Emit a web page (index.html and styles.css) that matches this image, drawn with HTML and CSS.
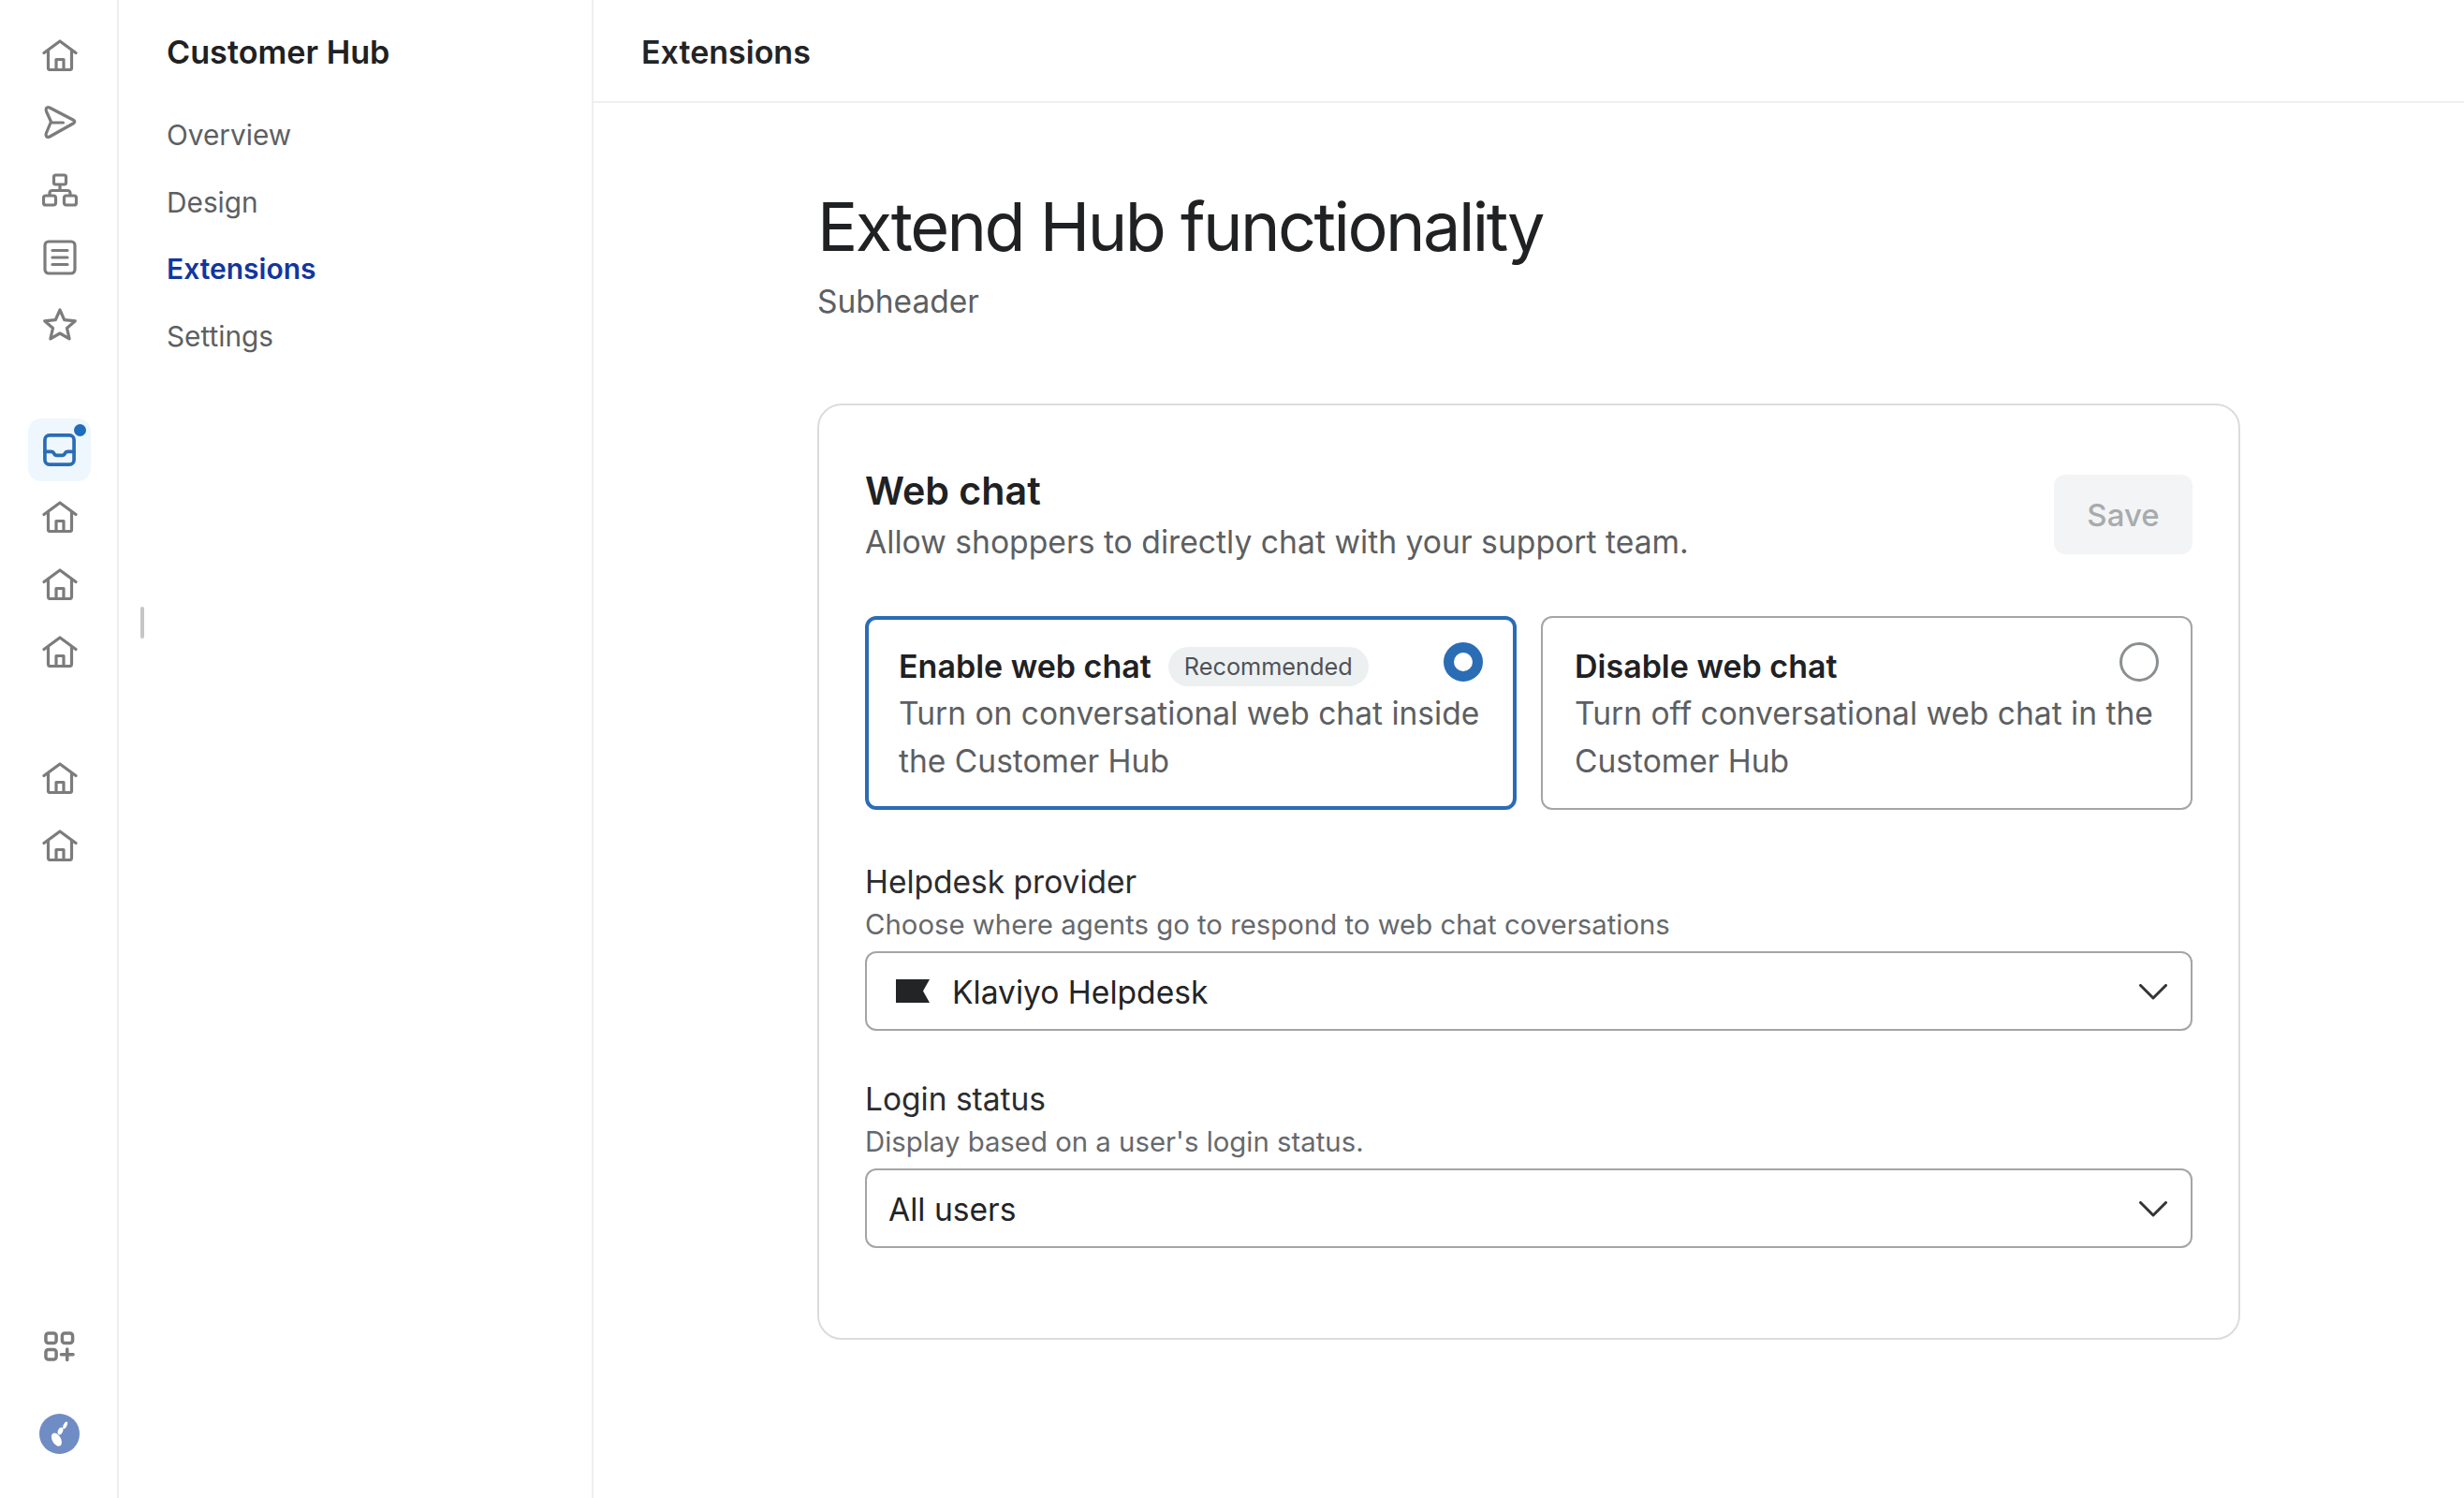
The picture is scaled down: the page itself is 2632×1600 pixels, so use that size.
FILE: index.html
```html
<!DOCTYPE html>
<html lang="en">
<head>
<meta charset="utf-8">
<title>Extensions</title>
<link rel="stylesheet" href="styles.css">
</head>
<body>
<svg class="defs" width="0" height="0" aria-hidden="true">
  <symbol id="house" viewBox="0 0 38 34">
    <path d="M2 14.5 19 2l17 12.5M6.5 12v18.500q0 2 2 2h21q2 0 2-2V12M15 32.500V21.500h8v11" fill="none" stroke="currentColor" stroke-width="3.200" stroke-linejoin="round" stroke-linecap="round"/>
  </symbol>
</svg>
<div class="app">
  <nav class="rail">
    <div class="rail-group rail-group-first">
      <a class="rail-item"><svg class="icon house"><use href="#house"/></svg></a>
      <a class="rail-item"><svg class="icon" viewBox="0 0 38 38"><path d="M4.500 3.500q1.200-1.500 3.500-.5l25 13q3.500 2 0 4L8 34q-2.500 1-3.500-.5T4.500 30l5-12-5-11q-.8-2 0-3.500ZM9.500 19h13" fill="none" stroke="currentColor" stroke-width="3.200" stroke-linejoin="round" stroke-linecap="round"/></svg></a>
      <a class="rail-item"><svg class="icon" viewBox="0 0 38 38"><g fill="none" stroke="currentColor" stroke-width="3.200" stroke-linejoin="round"><rect x="12.500" y="3" width="13" height="10" rx="2"/><rect x="1.500" y="25" width="13" height="10" rx="2.500"/><rect x="23.500" y="25" width="13" height="10" rx="2.500"/><path d="M19 13v6M8 25v-2.500q0-3 3-3h16q3 0 3 3V25"/></g></svg></a>
      <a class="rail-item"><svg class="icon" viewBox="0 0 38 38"><g fill="none" stroke="currentColor" stroke-width="3.200" stroke-linecap="round"><rect x="3" y="2" width="32" height="34" rx="4"/><path d="M11 11.500h16M11 19h16M11 26.500h16"/></g></svg></a>
      <a class="rail-item"><svg class="icon" viewBox="0 0 38 38"><path d="M19 3l4.700 10.700 11.600 1.100-8.800 7.700 2.600 11.400L19 28l-10.100 5.900 2.600-11.400-8.800-7.700 11.600-1.100Z" fill="none" stroke="currentColor" stroke-width="3.200" stroke-linejoin="round"/></svg></a>
    </div>
    <div class="rail-group">
      <a class="rail-item rail-item-active">
        <span class="inbox-tile">
          <svg class="icon inbox" viewBox="0 0 36 36"><g fill="none" stroke="currentColor" stroke-width="3.800" stroke-linejoin="round" stroke-linecap="round"><rect x="2" y="2" width="32" height="32" rx="5"/><path d="M2 20h7q2 0 3 2t3 2h6q2 0 3-2t3-2h7"/></g></svg>
          <span class="dot"></span>
        </span>
      </a>
      <a class="rail-item"><svg class="icon house"><use href="#house"/></svg></a>
      <a class="rail-item"><svg class="icon house"><use href="#house"/></svg></a>
      <a class="rail-item"><svg class="icon house"><use href="#house"/></svg></a>
    </div>
    <div class="rail-group">
      <a class="rail-item"><svg class="icon house"><use href="#house"/></svg></a>
      <a class="rail-item"><svg class="icon house"><use href="#house"/></svg></a>
    </div>
    <div class="rail-bottom">
      <a class="rail-item"><svg class="icon apps" viewBox="0 0 34 34"><g fill="none" stroke="currentColor" stroke-width="3.600" stroke-linecap="round"><rect x="2" y="2" width="11.500" height="11" rx="3"/><rect x="20" y="2" width="11.500" height="11" rx="3"/><rect x="2" y="20" width="11.500" height="11" rx="3"/><path d="M19 25.500h13M25.500 19.500v12"/></g></svg></a>
      <span class="avatar">
        <svg class="avatar-leaf" viewBox="0 0 42 42"><g fill="#fff"><ellipse cx="18" cy="27" rx="4.500" ry="7.500" transform="rotate(-30 18 27)"/><ellipse cx="22" cy="18" rx="2.500" ry="4" transform="rotate(25 22 18)"/><ellipse cx="27" cy="12" rx="1.800" ry="4" transform="rotate(25 27 12)"/></g></svg>
      </span>
    </div>
  </nav>

  <aside class="subnav">
    <div class="subnav-title">Customer Hub</div>
    <a class="subnav-link">Overview</a>
    <a class="subnav-link">Design</a>
    <a class="subnav-link subnav-link-active">Extensions</a>
    <a class="subnav-link">Settings</a>
  </aside>
  <span class="collapse-handle"></span>

  <div class="main">
    <header class="topbar">Extensions</header>
    <main class="content">
      <h1 class="page-title">Extend Hub functionality</h1>
      <p class="page-sub">Subheader</p>

      <section class="card">
        <div class="card-head">
          <div>
            <h2 class="card-title">Web chat</h2>
            <p class="card-desc">Allow shoppers to directly chat with your support team.</p>
          </div>
          <button class="save-btn" type="button">Save</button>
        </div>

        <div class="options">
          <div class="option option-selected">
            <span class="radio radio-on"></span>
            <div class="option-title">Enable web chat <span class="pill">Recommended</span></div>
            <p class="option-desc">Turn on conversational web chat inside the Customer Hub</p>
          </div>
          <div class="option">
            <span class="radio"></span>
            <div class="option-title">Disable web chat</div>
            <p class="option-desc">Turn off conversational web chat in the Customer Hub</p>
          </div>
        </div>

        <div class="field">
          <div class="field-label">Helpdesk provider</div>
          <div class="field-help">Choose where agents go to respond to web chat coversations</div>
          <div class="select">
            <svg class="flag" viewBox="0 0 36 25"><path d="M0 0h36l-7 12.500L36 25H0Z" fill="#232426"/></svg>
            <span class="select-value">Klaviyo Helpdesk</span>
            <svg class="chevron" viewBox="0 0 30 17"><path d="M1.500 1.500 15 15 28.500 1.500" fill="none" stroke="currentColor" stroke-width="3" stroke-linecap="round" stroke-linejoin="round"/></svg>
          </div>
        </div>

        <div class="field field-second">
          <div class="field-label">Login status</div>
          <div class="field-help">Display based on a user's login status.</div>
          <div class="select">
            <span class="select-value">All users</span>
            <svg class="chevron" viewBox="0 0 30 17"><path d="M1.500 1.500 15 15 28.500 1.500" fill="none" stroke="currentColor" stroke-width="3" stroke-linecap="round" stroke-linejoin="round"/></svg>
          </div>
        </div>
      </section>
    </main>
  </div>
</div>
</body>
</html>
```

FILE: styles.css
```css
* { box-sizing: border-box; }
html, body { margin: 0; height: 100%; }
body {
  font-family: Inter, "Liberation Sans", sans-serif;
  color: #232426;
  background: #fff;
  overflow: hidden;
}
.defs { position: absolute; }
.app { display: flex; height: 1600px; position: relative; }

/* icon rail */
.rail {
  width: 127px;
  flex: none;
  border-right: 2px solid #eeeeee;
  padding: 23px 0 47px 2px;
  display: flex;
  flex-direction: column;
  color: #7c7c7c;
}
.rail-group { display: flex; flex-direction: column; margin-bottom: 63px; }
.rail-group-first { margin-bottom: 61px; }
.rail-item { height: 72px; display: flex; align-items: center; justify-content: center; }
.icon { width: 38px; height: 38px; display: block; }
.icon.house { height: 34px; }
.icon.inbox { width: 35px; height: 35px; color: #2a6db5; }
.icon.apps { width: 33px; height: 33px; }
.inbox-tile {
  position: relative;
  width: 67px;
  height: 67px;
  border-radius: 14px;
  background: #eef7fd;
  display: flex;
  align-items: center;
  justify-content: center;
}
.dot {
  position: absolute;
  top: 6px;
  right: 5px;
  width: 13px;
  height: 13px;
  border-radius: 50%;
  background: #1f6dbb;
}
.rail-bottom { margin-top: auto; display: flex; flex-direction: column; align-items: center; gap: 36px; }
.rail-bottom .rail-item { width: 100%; }
.avatar {
  width: 43px;
  height: 43px;
  border-radius: 50%;
  background: #6f8cc4;
  display: block;
}
.avatar-leaf { width: 43px; height: 43px; display: block; }

/* secondary nav */
.subnav {
  width: 507px;
  flex: none;
  border-right: 2px solid #eeeeee;
  padding-left: 51px;
  display: flex;
  flex-direction: column;
}
.subnav-title {
  height: 109px;
  padding-top: 34px;
  font-size: 34.2px;
  line-height: 44px;
  font-weight: 600;
  color: #202123;
}
.subnav-link {
  height: 71.6px;
  font-size: 29.8px;
  line-height: 71.6px;
  color: #5d5f62;
}
.subnav-link-active { color: #12369e; font-weight: 600; font-size: 30px; }
.collapse-handle {
  position: absolute;
  left: 150px;
  top: 648px;
  width: 4px;
  height: 34px;
  border-radius: 2px;
  background: #c6c6c6;
}

/* main */
.main { flex: 1; min-width: 0; }
.topbar {
  height: 110px;
  border-bottom: 2px solid #f0f0f0;
  padding: 34px 0 0 51px;
  font-size: 34px;
  line-height: 44px;
  font-weight: 600;
  color: #232426;
}
.content { width: 1520px; margin: 0 auto; }
.page-title {
  margin: 0;
  padding-top: 88px;
  font-size: 72px;
  line-height: 88px;
  font-weight: 400;
  letter-spacing: -2.56px;
  color: #202123;
}
.page-sub {
  margin: 14px 0 0;
  font-size: 33.5px;
  line-height: 44px;
  color: #5d5f62;
}

.card {
  margin-top: 87px;
  height: 1000px;
  border: 2px solid #dcdcdc;
  border-radius: 26px;
  padding: 50px 49px;
}
.card-head { display: flex; justify-content: space-between; align-items: flex-start; height: 175px; }
.card-title {
  margin: 15px 0 0;
  font-size: 41.2px;
  line-height: 52px;
  font-weight: 600;
  color: #202123;
}
.card-desc {
  margin: 6px 0 0;
  font-size: 33.7px;
  line-height: 46px;
  color: #5d5f62;
}
.save-btn {
  margin-top: 24px;
  width: 148px;
  height: 85px;
  border: 0;
  border-radius: 12px;
  background: #f3f4f5;
  color: #a7abae;
  font: 500 33px Inter, "Liberation Sans", sans-serif;
}

.options { display: flex; gap: 26px; }
.option {
  position: relative;
  flex: 1;
  height: 207px;
  border: 2px solid #a3a5a7;
  border-radius: 12px;
  padding: 27px 20px 0 34px;
}
.option-selected { border: 4px solid #2a6db5; padding: 25px 18px 0 32px; }
.option-title {
  font-size: 34px;
  line-height: 50px;
  font-weight: 600;
  color: #202123;
  display: flex;
  align-items: center;
}
.pill {
  margin-left: 18px;
  padding: 0 17px;
  height: 42px;
  line-height: 42px;
  border-radius: 21px;
  background: #edf0f1;
  color: #4f5255;
  font-size: 25.3px;
  font-weight: 400;
}
.option-desc {
  margin: 0;
  font-size: 33.55px;
  line-height: 50.5px;
  color: #5d5f62;
}
.radio {
  position: absolute;
  top: 26px;
  right: 34px;
  width: 42px;
  height: 42px;
  border-radius: 50%;
  border: 3px solid #8c8f91;
  background: #fff;
}
.radio-on { top: 24px; right: 32px; border: 11px solid #2a6db5; }

.field { margin-top: 54px; }
.field-second { margin-top: 50px; }
.field-label { font-size: 33.5px; line-height: 46px; color: #2b2c2e; }
.field-help { font-size: 29.35px; line-height: 42px; color: #66696c; margin-top: 2px; }
.select {
  margin-top: 7px;
  height: 85px;
  border: 2px solid #a3a5a7;
  border-radius: 12px;
  padding: 2px 25px 0 23px;
  display: flex;
  align-items: center;
}
.flag { width: 36px; height: 25px; margin: -2px 24px 0 8px; flex: none; }
.select-value { font-size: 33.6px; color: #232426; }
.chevron { width: 30px; height: 17px; margin-left: auto; color: #323436; }
```
